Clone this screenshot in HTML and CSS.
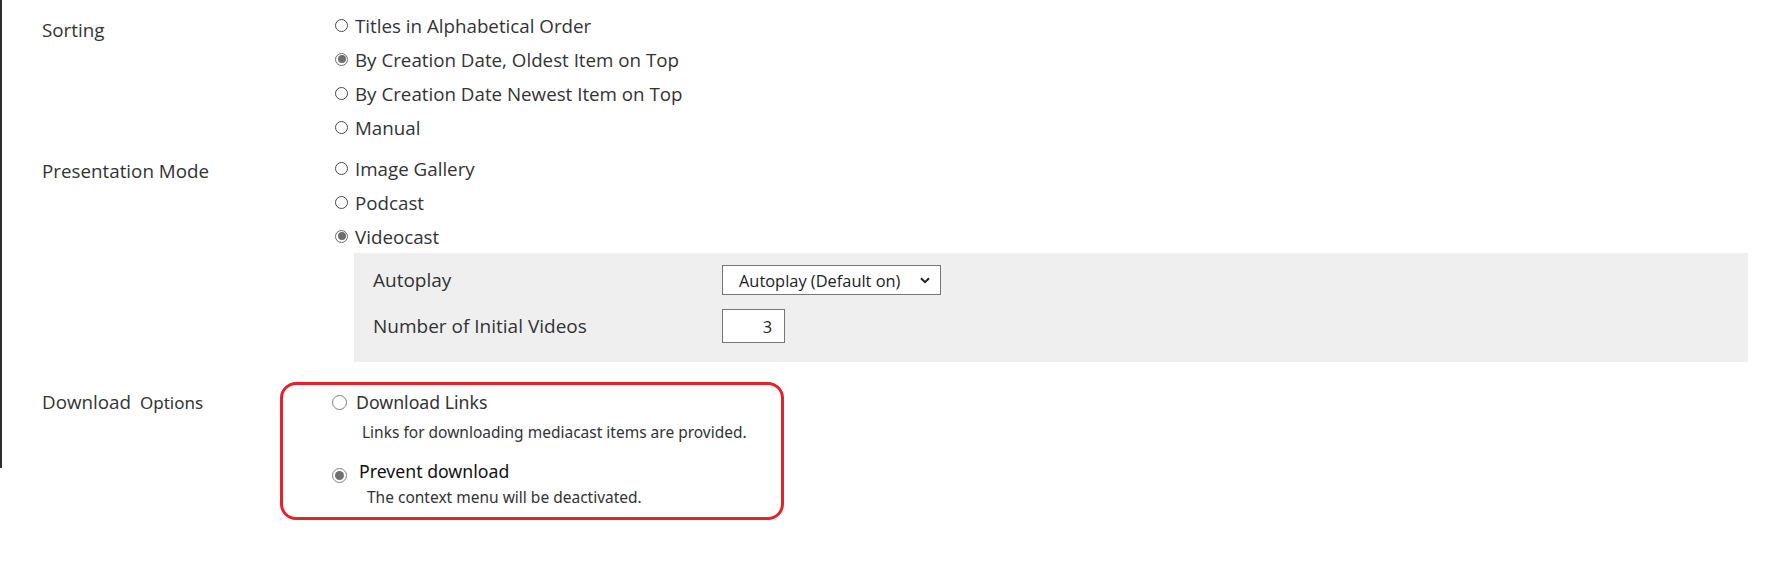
FILE: index.html
```html
<!DOCTYPE html>
<html lang="en">
<head>
<meta charset="utf-8">
<title>Mediacast Settings</title>
<link rel="stylesheet" href="styles.css">
</head>
<body>
<div class="page">
  <div class="form">
    <div class="row row-sorting">
      <div class="label">Sorting</div>
      <div class="options">
        <label class="opt"><span class="radio"></span>Titles in Alphabetical Order</label>
        <label class="opt"><span class="radio checked"></span>By Creation Date, Oldest Item on Top</label>
        <label class="opt"><span class="radio"></span>By Creation Date Newest Item on Top</label>
        <label class="opt"><span class="radio"></span>Manual</label>
      </div>
    </div>
    <div class="row row-mode">
      <div class="label">Presentation Mode</div>
      <div class="options">
        <label class="opt"><span class="radio"></span>Image Gallery</label>
        <label class="opt"><span class="radio"></span>Podcast</label>
        <label class="opt"><span class="radio checked"></span>Videocast</label>
      </div>
    </div>
    <div class="subpanel">
      <div class="subrow">
        <div class="sublabel">Autoplay</div>
        <div class="select">
          <span class="select-text">Autoplay (Default on)</span>
          <svg class="chev" width="10" height="7" viewBox="0 0 10 7"><path d="M1 1.2 L5 5.2 L9 1.2" fill="none" stroke="#222" stroke-width="2"/></svg>
        </div>
      </div>
      <div class="subrow">
        <div class="sublabel">Number of Initial Videos</div>
        <div class="number">3</div>
      </div>
    </div>
    <div class="row row-download">
      <div class="label">Download<span class="label-gap">Options</span></div>
      <div class="options download-options">
        <div class="dl-item">
          <label class="opt dl-opt"><span class="radio big"></span>Download Links</label>
          <div class="dl-desc">Links for downloading mediacast items are provided.</div>
        </div>
        <div class="dl-item dl-item-2">
          <label class="opt dl-opt dl-opt-2"><span class="radio big checked"></span>Prevent download</label>
          <div class="dl-desc dl-desc-2">The context menu will be deactivated.</div>
        </div>
        <div class="highlight"></div>
      </div>
    </div>
  </div>
</div>
</body>
</html>
```

FILE: styles.css
```css
html, body {
  margin: 0;
  padding: 0;
  background: #ffffff;
}

body {
  font-family: "Open Sans", "Noto Sans", sans-serif;
  color: #333333;
}

.page {
  width: 1748px;
  min-height: 575px;
  position: relative;
}

.page::before {
  content: "";
  position: absolute;
  left: 0;
  top: 0;
  width: 2px;
  height: 468px;
  background: #2e2e2e;
}

.form {
  padding-left: 2px;
}

.row {
  display: flex;
  align-items: flex-start;
}

.label {
  width: 292px;
  padding-left: 40px;
  font-size: 18.8px;
  line-height: 24px;
  color: #333;
  box-sizing: content-box;
  white-space: nowrap;
}

.row-sorting {
  padding-top: 8px;
}

.row-sorting .label {
  padding-top: 10px;
}

.row-mode {
  padding-top: 7px;
}

.row-mode .label {
  padding-top: 8px;
}

.options {
  display: flex;
  flex-direction: column;
}

.opt {
  display: flex;
  align-items: center;
  height: 34px;
  font-size: 18.75px;
  color: #333;
  white-space: nowrap;
}

.radio {
  width: 11px;
  height: 11px;
  border: 1px solid #4a4a4a;
  border-radius: 50%;
  margin-right: 7px;
  margin-left: 1px;
  box-sizing: content-box;
  display: inline-flex;
  align-items: center;
  justify-content: center;
  background: #fff;
  flex: none;
}

.radio.checked {
  border-color: #6b6b6b;
}

.radio.checked::after {
  content: "";
  width: 8px;
  height: 8px;
  border-radius: 50%;
  background: #6e6e6e;
}

.subpanel {
  margin-left: 352px;
  background: #efefef;
  height: 109px;
  padding: 12px 0 0 19px;
  box-sizing: border-box;
  display: flex;
  flex-direction: column;
  gap: 14px;
}

.subrow {
  display: flex;
  align-items: center;
}

.sublabel {
  width: 349px;
  font-size: 19px;
  color: #333;
  white-space: nowrap;
}

.select {
  width: 219px;
  height: 30px;
  border: 1px solid #767676;
  background: #fff;
  box-sizing: border-box;
  display: flex;
  align-items: center;
  justify-content: space-between;
  padding: 0 10px 0 16px;
  font-size: 16.4px;
  color: #222;
  white-space: nowrap;
}

.chev {
  display: block;
  flex: none;
}

.number {
  width: 63px;
  height: 34px;
  border: 1px solid #767676;
  background: #fff;
  box-sizing: border-box;
  display: flex;
  align-items: center;
  justify-content: flex-end;
  padding-right: 12px;
  font-size: 16.4px;
  color: #222;
}

.row-download {
  padding-top: 27px;
}

.label-gap {
  margin-left: 9px;
  font-family: "Noto Sans", sans-serif;
  font-size: 17px;
}

.row-download .label {
  padding-top: 1px;
}

.download-options {
  position: relative;
}

.dl-opt {
  height: 26px;
  font-family: "Noto Sans", "Open Sans", sans-serif;
  font-size: 17.7px;
  color: #333;
}

.radio.big {
  width: 13px;
  height: 13px;
  border: 1px solid #808080;
  margin-right: 9px;
  margin-left: -2px;
}

.radio.big.checked::after {
  width: 9px;
  height: 9px;
  background: #707070;
}

.dl-desc {
  font-family: "Noto Sans", "Open Sans", sans-serif;
  font-size: 15.5px;
  line-height: 20px;
  color: #333;
  padding-left: 28px;
  margin-top: 7px;
  white-space: nowrap;
}

.dl-item-2 {
  margin-top: 15px;
}

.dl-opt-2 {
  color: #111;
  align-items: flex-end;
}

.dl-opt-2 .radio {
  margin-right: 12px;
}

.dl-desc-2 {
  padding-left: 33px;
  margin-top: 4px;
}

.highlight {
  position: absolute;
  left: -54px;
  top: -7px;
  width: 504px;
  height: 138px;
  border: 3px solid #e8202a;
  border-radius: 16px;
  box-sizing: border-box;
  pointer-events: none;
}
```
